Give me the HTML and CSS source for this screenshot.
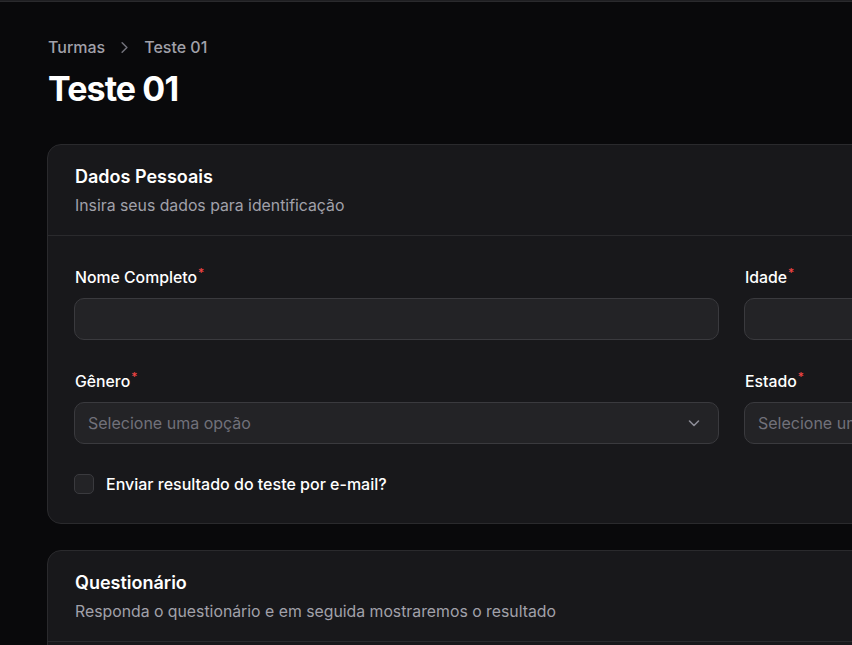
FILE: index.html
```html
<!DOCTYPE html>
<html lang="pt-BR">
<head>
<meta charset="utf-8">
<title>Teste 01</title>
<link rel="stylesheet" href="styles.css">
</head>
<body>
<div class="topbar"></div>
<main class="page">
  <nav class="breadcrumbs">
    <span class="crumb">Turmas</span>
    <svg class="crumb-sep" viewBox="0 0 20 20" width="20" height="20"><path d="M7.5 5l5 5-5 5" fill="none" stroke="currentColor" stroke-width="1.6" stroke-linecap="round" stroke-linejoin="round"/></svg>
    <span class="crumb">Teste 01</span>
  </nav>
  <h1 class="title">Teste 01</h1>

  <section class="card">
    <header class="card-header">
      <h2 class="card-title">Dados Pessoais</h2>
      <p class="card-desc">Insira seus dados para identificação</p>
    </header>
    <div class="card-body">
      <div class="grid">
        <div class="field span-2">
          <label class="label">Nome Completo<sup class="req">*</sup></label>
          <div class="input"></div>
        </div>
        <div class="field">
          <label class="label">Idade<sup class="req">*</sup></label>
          <div class="input"></div>
        </div>
        <div class="field span-2">
          <label class="label">Gênero<sup class="req">*</sup></label>
          <div class="input select">
            <span class="placeholder">Selecione uma opção</span>
            <svg class="chev" viewBox="0 0 20 20" width="20" height="20"><path d="M5.5 8l4.5 4.5L14.5 8" fill="none" stroke="currentColor" stroke-width="1.6" stroke-linecap="round" stroke-linejoin="round"/></svg>
          </div>
        </div>
        <div class="field">
          <label class="label">Estado<sup class="req">*</sup></label>
          <div class="input select">
            <span class="placeholder">Selecione uma opção</span>
            <svg class="chev" viewBox="0 0 20 20" width="20" height="20"><path d="M5.5 8l4.5 4.5L14.5 8" fill="none" stroke="currentColor" stroke-width="1.6" stroke-linecap="round" stroke-linejoin="round"/></svg>
          </div>
        </div>
        <div class="field span-3 check-row">
          <span class="checkbox"></span>
          <span class="check-label">Enviar resultado do teste por e-mail?</span>
        </div>
      </div>
    </div>
  </section>

  <section class="card">
    <header class="card-header">
      <h2 class="card-title">Questionário</h2>
      <p class="card-desc">Responda o questionário e em seguida mostraremos o resultado</p>
    </header>
    <div class="card-body">
      <div class="grid">
        <div class="field span-2">
          <label class="label">Pergunta 1<sup class="req">*</sup></label>
          <div class="input"></div>
        </div>
      </div>
    </div>
  </section>
</main>
</body>
</html>
```
FILE: styles.css
```css
* { box-sizing: border-box; }
html, body { margin: 0; padding: 0; }
body {
  background: #09090b;
  color: #fff;
  font-family: Inter, "Noto Sans", sans-serif;
  overflow: hidden;
  width: 852px;
  height: 645px;
}
.topbar {
  height: 2px;
  background: #1f1f22;
  border-bottom: 1px solid #2a2a2d;
  border-top: 0;
}
.page {
  padding: 34px 0 0 48px;
  width: 1100px;
  display: flex;
  flex-direction: column;
}
.breadcrumbs {
  display: flex;
  align-items: center;
  gap: 10px;
  height: 22px;
}
.crumb {
  font-size: 16px;
  font-weight: 500;
  color: #a1a1aa;
}
.crumb-sep { color: #71717a; width: 19px; height: 19px; }
.title {
  margin: 11px 0 0;
  font-size: 34px;
  line-height: 40px;
  font-weight: 700;
  letter-spacing: -0.9px;
}
.card {
  margin-top: 35px;
  margin-left: -1px;
  width: 1040px;
  background: #18181b;
  border: 1px solid #2a2a2d;
  border-radius: 14px;
}
.card + .card { margin-top: 26px; }
.card-header {
  padding: 20px 28px 19px 27px;
  border-bottom: 1px solid #2a2a2d;
}
.card-title {
  margin: 0;
  font-size: 18px;
  line-height: 24px;
  font-weight: 600;
}
.card-desc {
  margin: 7px 0 0;
  font-size: 15.8px;
  line-height: 20px;
  color: #a1a1aa;
}
.card-body { padding: 30px 28px 29px 26px; }
.grid {
  display: grid;
  grid-template-columns: 310px 310px 310px;
  column-gap: 25px;
  row-gap: 30px;
}
.span-2 { grid-column: span 2; }
.span-3 { grid-column: span 3; }
.field { display: flex; flex-direction: column; gap: 8px; }
.label {
  font-size: 15.8px;
  line-height: 24px;
  font-weight: 500;
  color: #fff;
  padding-left: 1px;
}
.req {
  color: #ef4444;
  font-size: 12px;
  line-height: 0;
  margin-left: 1px;
  vertical-align: 6px;
  font-weight: 500;
}
.input {
  height: 42px;
  background: #232326;
  border: 1px solid #3a3a3e;
  border-radius: 10px;
}
.select {
  display: flex;
  align-items: center;
  justify-content: space-between;
  padding: 0 14px 0 13px;
}
.placeholder {
  font-size: 16px;
  color: #71717a;
}
.chev { color: #8b8b95; }
.check-row {
  flex-direction: row;
  align-items: center;
  gap: 12px;
  padding-top: 0;
}
.checkbox {
  width: 20px;
  height: 20px;
  border-radius: 5px;
  background: #232326;
  border: 1px solid #3a3a3e;
}
.check-label {
  font-size: 16px;
  font-weight: 500;
  color: #fff;
}
```
